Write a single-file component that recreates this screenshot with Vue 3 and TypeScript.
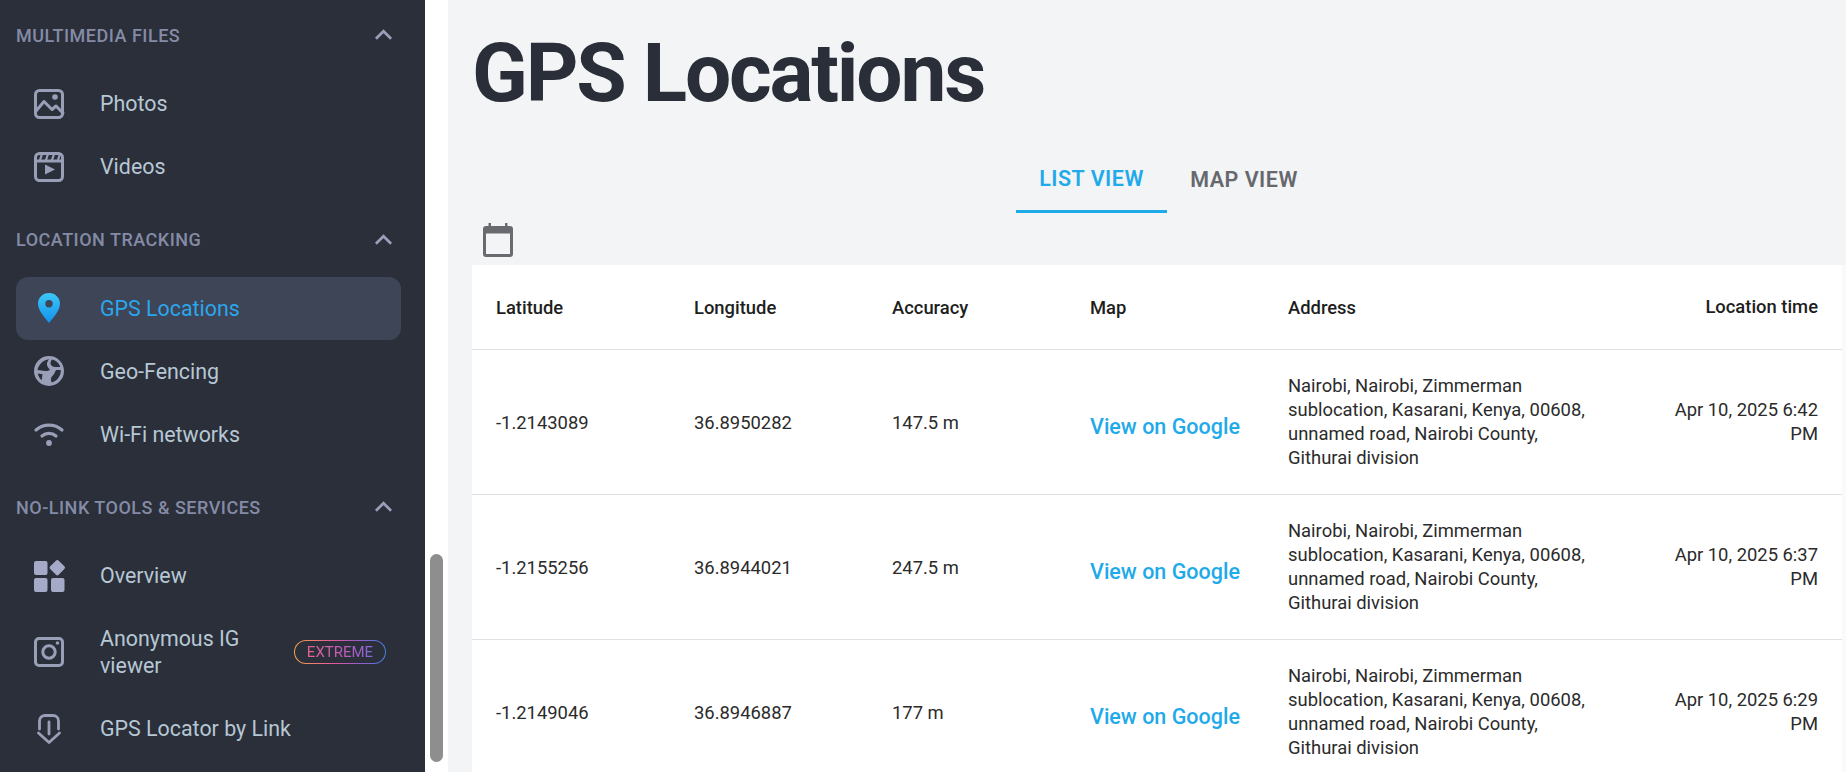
<script setup lang="ts">
interface NavItem { label: string; icon: string; active?: boolean; badge?: string }
interface Section { title: string; items: NavItem[] }
const sections: Section[] = [
  { title: 'MULTIMEDIA FILES', items: [
    { label: 'Photos', icon: 'photo' }, { label: 'Videos', icon: 'video' } ] },
  { title: 'LOCATION TRACKING', items: [
    { label: 'GPS Locations', icon: 'pin', active: true },
    { label: 'Geo-Fencing', icon: 'globe' },
    { label: 'Wi-Fi networks', icon: 'wifi' } ] },
  { title: 'NO-LINK TOOLS & SERVICES', items: [
    { label: 'Overview', icon: 'grid' },
    { label: 'Anonymous IG viewer', icon: 'ig', badge: 'EXTREME' },
    { label: 'GPS Locator by Link', icon: 'link' } ] },
]
const address = 'Nairobi, Nairobi, Zimmerman sublocation, Kasarani, Kenya, 00608, unnamed road, Nairobi County, Githurai division'
const rows = [
  { lat: '-1.2143089', lng: '36.8950282', acc: '147.5 m', time: 'Apr 10, 2025 6:42 PM' },
  { lat: '-1.2155256', lng: '36.8944021', acc: '247.5 m', time: 'Apr 10, 2025 6:37 PM' },
  { lat: '-1.2149046', lng: '36.8946887', acc: '177 m', time: 'Apr 10, 2025 6:29 PM' },
]
</script>

<template>
  <div class="page">
    <aside class="sidebar">
      <section v-for="s in sections" :key="s.title" class="section">
        <header class="section-head">
          <span>{{ s.title }}</span>
          <svg class="chev" viewBox="0 0 20 12"><path d="M2 10l8-8 8 8" fill="none" stroke="currentColor" stroke-width="2.8" /></svg>
        </header>
        <a v-for="it in s.items" :key="it.label" class="item" :class="{ active: it.active }">
          <svg class="icon" viewBox="0 0 30 30">
            <defs>
              <linearGradient id="pinGrad" x1="0" y1="0" x2="0" y2="1"><stop offset="0" stop-color="#3cc8f8" /><stop offset="1" stop-color="#1390ee" /></linearGradient>
            </defs>
            <g v-if="it.icon === 'photo'" fill="none" stroke="#9a9fb8" stroke-width="3" stroke-linejoin="round" stroke-linecap="round">
              <rect x="1.5" y="1.5" width="27" height="27" rx="4" />
              <path d="M2 22l8-9.500 8 8 4-3.500 7 7" />
              <circle cx="21" cy="8" r="2.800" fill="#9a9fb8" stroke="none" />
            </g>
            <g v-else-if="it.icon === 'video'" fill="none" stroke="#9a9fb8" stroke-width="3" stroke-linejoin="round">
              <rect x="1.5" y="1.5" width="27" height="27" rx="4" />
              <path d="M2 9h26" />
              <path d="M8 2L6 8M14 2l-2 6M20 2l-2 6M26 2l-2 6" stroke-width="2.200" />
              <path d="M11 12.500l10 5-10 5z" fill="#9a9fb8" stroke="none" />
            </g>
            <g v-else-if="it.icon === 'pin'">
              <path fill-rule="evenodd" d="M15 0C8.700 0 4 4.800 4 10.800 4 17.500 11 25 15 30c4-5 11-12.500 11-19.200C26 4.800 21.300 0 15 0zm0 14.500a3.700 3.700 0 1 1 0-7.400 3.700 3.700 0 0 1 0 7.400z" fill="url(#pinGrad)" />
            </g>
            <g v-else-if="it.icon === 'globe'">
              <circle cx="15" cy="15" r="15" fill="#9a9fb8" />
              <path d="M3.500 14C4.500 8.500 9 4 15 3.200c-1.200 1.800-2.500 3.600-2 5.800.5 2 2 3.500 3 5-2 1-3.500 1-5 1-2.500 0-5-1-7.500-1z" fill="#2a2f3a" />
              <path d="M18 3.400c4 .8 7.200 3.800 8.400 7.600H20.500c-2-.5-3.500-1.500-4-3.300-.2-1.500.5-3 1.500-4.300z" fill="#2a2f3a" />
              <path d="M26.800 14c.3 5.700-3.600 11-9 12.600-.9-1.600-1.200-3.200-.6-4.800.8-1.800 2.600-3 3.400-4.800.4-1 1-2.400 1.800-3z" fill="#2a2f3a" />
              <path d="M3.800 17.500c.5 2.800 2 5.100 3.900 6.800l.8-6z" fill="#2a2f3a" />
            </g>
            <g v-else-if="it.icon === 'wifi'" fill="none" stroke="#9a9fb8" stroke-width="3.200" stroke-linecap="round">
              <path d="M2 11c7.500-6.500 18.500-6.500 26 0" />
              <path d="M8 17c4-3.500 10-3.500 14 0" />
              <circle cx="15" cy="24" r="2.900" fill="#9a9fb8" stroke="none" />
            </g>
            <g v-else-if="it.icon === 'grid'" fill="#a5aac8">
              <rect x="0" y="0" width="13.500" height="14" rx="2" />
              <rect x="0" y="17" width="13.500" height="14" rx="2" />
              <rect x="17" y="17" width="13.500" height="14" rx="2" />
              <rect x="17.300" y=".7" width="12" height="12" rx="2" transform="rotate(45 23.300 6.700)" />
            </g>
            <g v-else-if="it.icon === 'ig'" fill="none" stroke="#9a9fb8" stroke-width="3">
              <rect x="1.500" y="1.500" width="27" height="27" rx="3.500" />
              <circle cx="15" cy="15" r="6.200" />
              <circle cx="23.500" cy="6" r="1.800" fill="#9a9fb8" stroke="none" />
            </g>
            <g v-else fill="none" stroke="#9a9fb8" stroke-width="2.800" stroke-linecap="round" stroke-linejoin="round">
              <path d="M5.500 15V7A5.500 5.500 0 0 1 11 1.500h8A5.500 5.500 0 0 1 24.500 7v8" />
              <path d="M15 8v12M4.500 19L15 28.500 25.500 19" />
            </g>
          </svg>
          <span class="label">{{ it.label }}</span>
          <span v-if="it.badge" class="badge"><span class="badge-text">{{ it.badge }}</span></span>
        </a>
      </section>
    </aside>
    <div class="gutter"><div class="thumb"></div></div>
    <main class="main">
      <h1 class="title">GPS Locations</h1>
      <nav class="tabs">
        <span class="tab on">LIST VIEW</span>
        <span class="tab">MAP VIEW</span>
      </nav>
      <div class="tools">
        <svg class="cal" viewBox="0 0 30 34"><path d="M3 3h2.500V0H8v3h14V0h2.500v3H27a3 3 0 0 1 3 3v25a3 3 0 0 1-3 3H3a3 3 0 0 1-3-3V6a3 3 0 0 1 3-3zm0 7.500V31h24V10.500z" fill="#686a70" /></svg>
      </div>
      <div class="table">
        <div class="row head">
          <div>Latitude</div><div>Longitude</div><div>Accuracy</div><div>Map</div><div>Address</div><div class="time">Location time</div>
        </div>
        <div v-for="r in rows" :key="r.lat" class="row">
          <div>{{ r.lat }}</div><div>{{ r.lng }}</div><div>{{ r.acc }}</div>
          <div class="link-cell"><a class="link">View on Google</a></div>
          <div class="addr">{{ address }}</div>
          <div class="time">{{ r.time }}</div>
        </div>
      </div>
    </main>
  </div>
</template>

<style>
html, body { margin: 0; height: 100%; overflow: hidden; background: #f3f4f6; }
</style>

<style scoped>
.page { display: flex; height: 772px; overflow: hidden; font-family: Roboto, sans-serif; }
.sidebar { width: 425px; flex: none; background: #2a2f3a; padding: 12px 24px 0 16px; box-sizing: border-box; }
.section { margin-bottom: 18.500px; }
.section-head { display: flex; align-items: center; justify-content: space-between; height: 46px; margin-bottom: 14px; font-size: 18px; font-weight: 500; letter-spacing: .5px; color: #858ba6; }
.chev { width: 19px; height: 12px; margin-right: 8px; color: #9a9fb8; }
.item { display: flex; align-items: center; padding: 18px 0 18px 18px; border-radius: 12px; color: #b7c7d4; font-size: 21.400px; line-height: 27px; }
.item.active { background: #3e4557; color: #2ba6ec; }
.icon { width: 30px; height: 30px; flex: none; margin: -1.500px 36px -1.500px 0; overflow: visible; }
.label { flex: 1; max-width: 170px; }
.item:not(:has(.badge)) .label { max-width: none; }
.badge { margin-left: 24px; height: 24px; width: 92px; flex: none; box-sizing: border-box; display: flex; align-items: center; justify-content: center; border-radius: 12px; border: 1.500px solid transparent; background: linear-gradient(#2a2f3a, #2a2f3a) padding-box, linear-gradient(90deg, #f7a14b, #e0569f 45%, #8a5fd0 75%, #4a7fe0) border-box; font-size: 15px; line-height: 18px; }
.badge-text { background: linear-gradient(90deg, #e0648c, #c25cc0 55%, #7f68d8); -webkit-background-clip: text; background-clip: text; color: transparent; }
.gutter { width: 23px; flex: none; background: #fff; position: relative; }
.thumb { position: absolute; left: 5px; top: 554px; width: 13px; height: 208px; border-radius: 7px; background: #8e8e8e; }
.main { flex: 1; min-width: 0; padding: 0 4px 0 24px; display: flex; flex-direction: column; }
.title { margin: 0; height: 151px; flex: none; line-height: 146px; font-size: 82px; font-weight: 700; color: #292e39; letter-spacing: -2.200px; }
.tabs { display: flex; justify-content: center; height: 62px; flex: none; padding-left: 23px; }
.tab { width: 151px; box-sizing: border-box; display: flex; align-items: center; justify-content: center; padding-bottom: 5px; font-size: 21.500px; font-weight: 600; letter-spacing: .5px; color: #66686e; }
.tab + .tab { width: 154px; }
.tab.on { color: #1faae9; border-bottom: 3px solid #1faae9; }
.tools { height: 52px; flex: none; padding: 10px 0 0 11px; box-sizing: border-box; }
.cal { display: block; width: 30px; height: 34px; }
.table { background: #fff; color: #2b2b2b; font-size: 18.400px; box-shadow: 4px 0 0 #fafafa; }
.row { display: grid; grid-template-columns: 198px 198px 198px 198px 1fr 160px; align-items: center; padding: 0 24px; height: 145px; box-sizing: border-box; border-bottom: 1px solid #e2e2e2; }
.row.head { height: 85px; font-weight: 500; color: #1e1e1e; }
.addr { line-height: 24px; padding-right: 65px; }
.time { text-align: right; line-height: 24px; }
.link-cell { padding-top: 9px; }
.link { color: #1faae9; font-size: 21.500px; font-weight: 500; }
</style>
